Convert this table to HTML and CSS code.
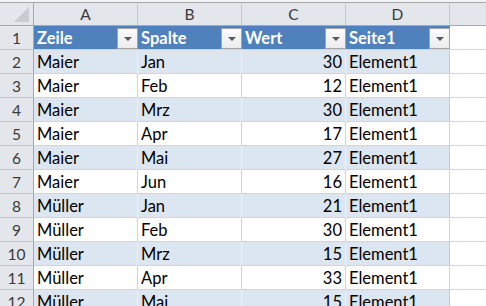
FILE: index.html
```html
<!DOCTYPE html>
<html lang="de">
<head>
<meta charset="utf-8">
<title>Tabelle</title>
<link rel="stylesheet" href="styles.css">
</head>
<body>
<div class="topstrip"></div>
<div class="sheet">
  <div class="corner"><span class="tri"></span></div>
  <div class="colhead">A</div>
  <div class="colhead">B</div>
  <div class="colhead">C</div>
  <div class="colhead">D</div>
  <div class="colhead rest"></div>

  <div class="rowhead">1</div>
  <div class="th">Zeile<span class="dd"><span class="arrow"></span></span></div>
  <div class="th">Spalte<span class="dd"><span class="arrow"></span></span></div>
  <div class="th">Wert<span class="dd"><span class="arrow"></span></span></div>
  <div class="th">Seite1<span class="dd"><span class="arrow"></span></span></div>
  <div class="cell rest"></div>

  <div class="rowhead">2</div><div class="td band">Maier</div><div class="td band">Jan</div><div class="td band num">30</div><div class="td band last">Element1</div><div class="cell rest"></div>
  <div class="rowhead">3</div><div class="td">Maier</div><div class="td">Feb</div><div class="td num">12</div><div class="td last">Element1</div><div class="cell rest"></div>
  <div class="rowhead">4</div><div class="td band">Maier</div><div class="td band">Mrz</div><div class="td band num">30</div><div class="td band last">Element1</div><div class="cell rest"></div>
  <div class="rowhead">5</div><div class="td">Maier</div><div class="td">Apr</div><div class="td num">17</div><div class="td last">Element1</div><div class="cell rest"></div>
  <div class="rowhead">6</div><div class="td band">Maier</div><div class="td band">Mai</div><div class="td band num">27</div><div class="td band last">Element1</div><div class="cell rest"></div>
  <div class="rowhead">7</div><div class="td">Maier</div><div class="td">Jun</div><div class="td num">16</div><div class="td last">Element1</div><div class="cell rest"></div>
  <div class="rowhead">8</div><div class="td band">Müller</div><div class="td band">Jan</div><div class="td band num">21</div><div class="td band last">Element1</div><div class="cell rest"></div>
  <div class="rowhead">9</div><div class="td">Müller</div><div class="td">Feb</div><div class="td num">30</div><div class="td last">Element1</div><div class="cell rest"></div>
  <div class="rowhead">10</div><div class="td band">Müller</div><div class="td band">Mrz</div><div class="td band num">15</div><div class="td band last">Element1</div><div class="cell rest"></div>
  <div class="rowhead">11</div><div class="td">Müller</div><div class="td">Apr</div><div class="td num">33</div><div class="td last">Element1</div><div class="cell rest"></div>
  <div class="rowhead">12</div><div class="td band">Müller</div><div class="td band">Mai</div><div class="td band num">15</div><div class="td band last">Element1</div><div class="cell rest"></div>
</div>
</body>
</html>
```

FILE: styles.css
```css
html, body {
  margin: 0;
  padding: 0;
  width: 486px;
  height: 306px;
  overflow: hidden;
  background: #ffffff;
}

body {
  font-family: "Lato", "Liberation Sans", sans-serif;
  font-size: 16.5px;
  color: #000;
}

.topstrip {
  height: 2px;
  background: #f2f3f5;
}

.sheet {
  display: grid;
  grid-template-columns: 34px 104px 104px 104px 104px 1fr;
  grid-auto-rows: 24px;
}

.sheet > div {
  box-sizing: border-box;
}

.corner {
  position: relative;
  background: #e3e6ea;
  border-top: 1px solid #a5a9ae;
  border-right: 1px solid #a5a9ae;
  border-bottom: 1px solid #a5a9ae;
}

.tri {
  position: absolute;
  right: 4px;
  bottom: 3px;
  width: 0;
  height: 0;
  border-left: 15px solid transparent;
  border-bottom: 15px solid #c8cbcf;
}

.colhead {
  background: #e3e6ea;
  border-top: 1px solid #a5a9ae;
  border-right: 1px solid #c3c7cd;
  border-bottom: 1px solid #a5a9ae;
  text-align: center;
  font-size: 15.5px;
  line-height: 23px;
  color: #3a3a3a;
}

.colhead.rest {
  border-right: none;
}

.rowhead {
  background: #e3e6ea;
  border-right: 1px solid #a5a9ae;
  border-bottom: 1px solid #c3c7cd;
  text-align: center;
  font-size: 15.5px;
  line-height: 24px;
  color: #3a3a3a;
}

.th {
  position: relative;
  background: #4f81bd;
  color: #ffffff;
  font-weight: bold;
  padding-left: 3px;
  line-height: 25px;
  border-bottom: 1px solid #d4d4d4;
}

.dd {
  position: absolute;
  right: 0;
  top: 2px;
  width: 21px;
  height: 21px;
  box-sizing: border-box;
  border: 1px solid #a4a4a4;
  background: linear-gradient(#fbfbfb, #ececec);
  display: flex;
  align-items: center;
  justify-content: center;
}

.arrow {
  width: 0;
  height: 0;
  border-left: 4px solid transparent;
  border-right: 4px solid transparent;
  border-top: 4px solid #555a60;
  margin-top: 1px;
}

.td {
  padding: 0 3px;
  line-height: 25px;
  border-right: 1px solid #d4d4d4;
  border-bottom: 1px solid #d4d4d4;
  white-space: nowrap;
  overflow: hidden;
}

.td.band {
  background: #dce6f1;
  border-right-color: #edf2f8;
}

.td.band.last {
  border-right-color: #b8cce4;
}

.td.num {
  text-align: right;
}

.cell.rest {
  border-bottom: 1px solid #d4d4d4;
}
```
